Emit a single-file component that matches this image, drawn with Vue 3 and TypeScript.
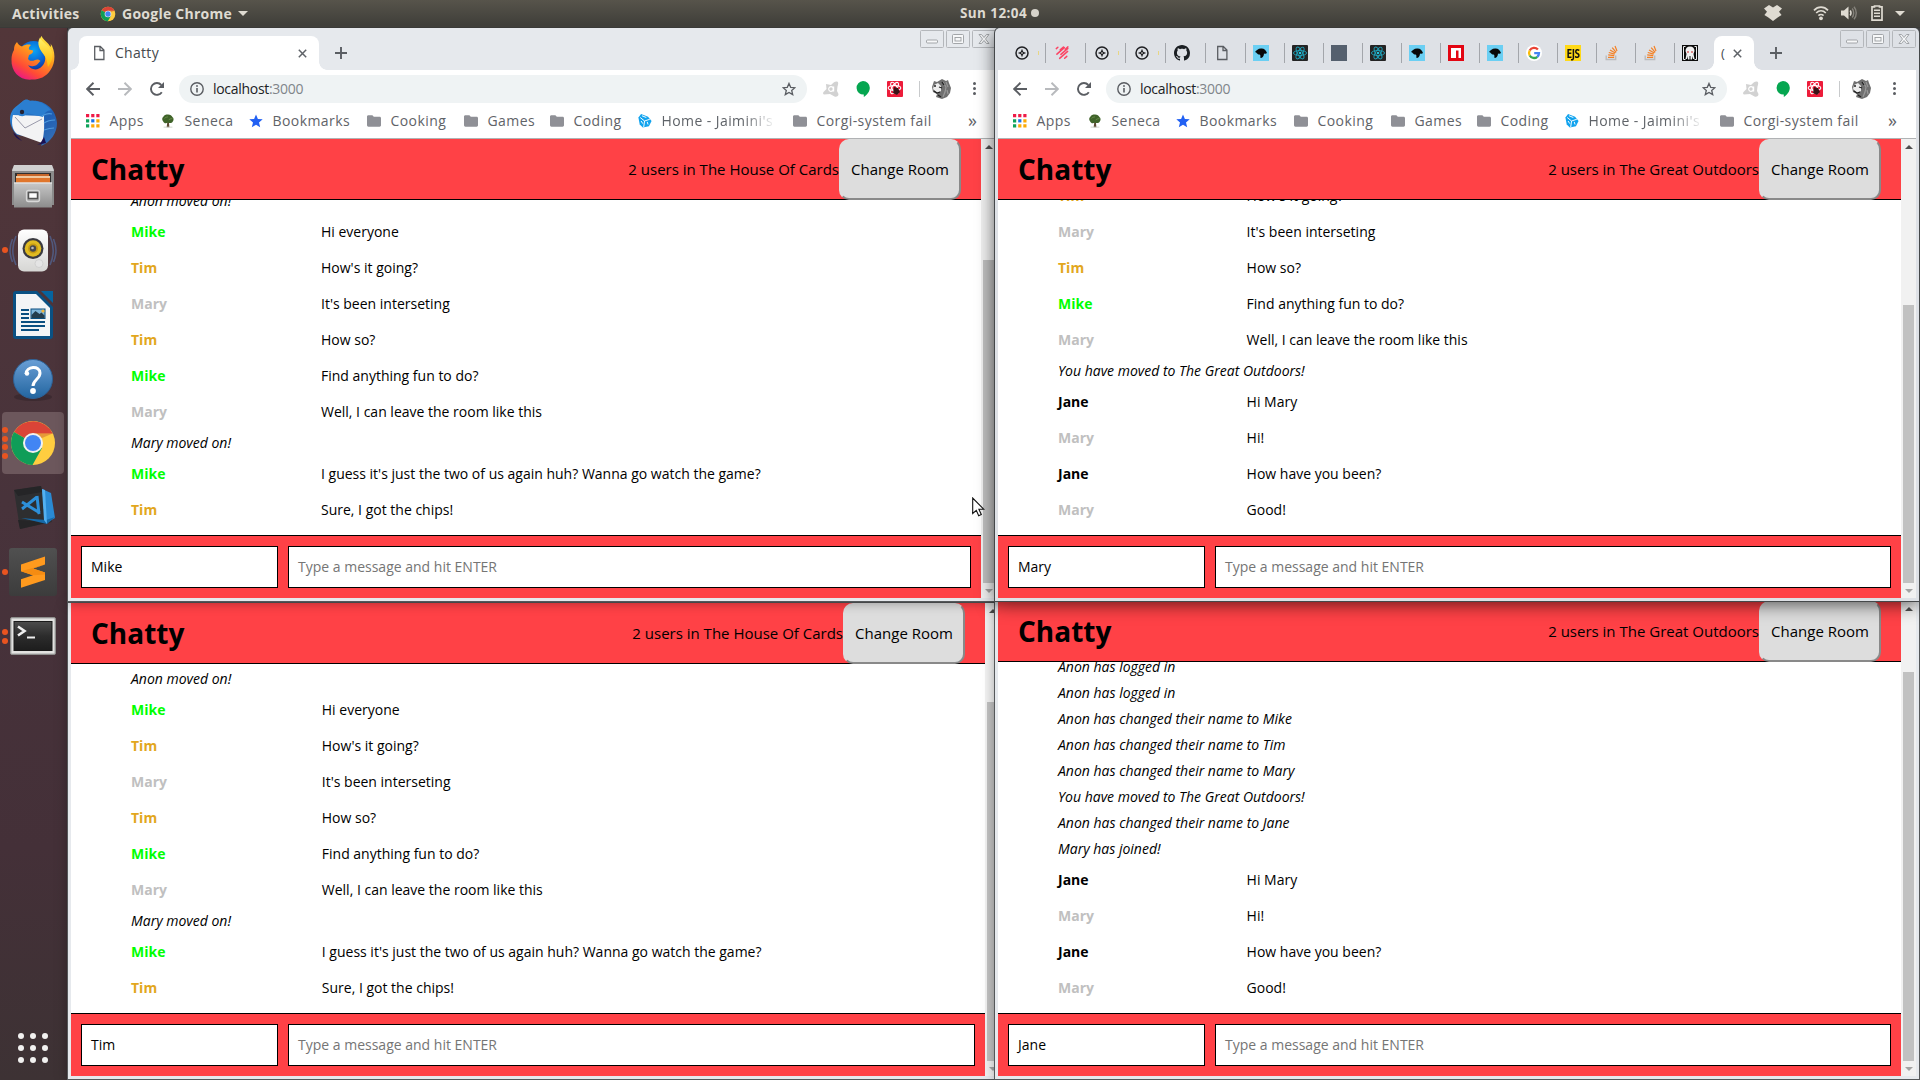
<script setup lang="ts">
interface Line {
  who?: string
  text: string
}
interface ChatWindow {
  id: string
  chrome: boolean
  room: string
  user: string
  thumbTop: number
  lines: Line[]
}

const house: Line[] = [
  { text: 'Anon moved on!' },
  { who: 'Mike', text: 'Hi everyone' },
  { who: 'Tim', text: "How's it going?" },
  { who: 'Mary', text: "It's been interseting" },
  { who: 'Tim', text: 'How so?' },
  { who: 'Mike', text: 'Find anything fun to do?' },
  { who: 'Mary', text: 'Well, I can leave the room like this' },
  { text: 'Mary moved on!' },
  { who: 'Mike', text: "I guess it's just the two of us again huh? Wanna go watch the game?" },
  { who: 'Tim', text: 'Sure, I got the chips!' },
]

const outdoors: Line[] = [
  { who: 'Jane', text: 'Hi Mary' },
  { who: 'Mary', text: 'Hi!' },
  { who: 'Jane', text: 'How have you been?' },
  { who: 'Mary', text: 'Good!' },
]

const windows: ChatWindow[] = [
  {
    id: 'jane', chrome: false, room: 'The Great Outdoors', user: 'Jane', thumbTop: 71,
    lines: [
      { text: 'Anon has logged in' },
      { text: 'Anon has logged in' },
      { text: 'Anon has changed their name to Mike' },
      { text: 'Anon has changed their name to Tim' },
      { text: 'Anon has changed their name to Mary' },
      { text: 'You have moved to The Great Outdoors!' },
      { text: 'Anon has changed their name to Jane' },
      { text: 'Mary has joined!' },
      ...outdoors,
    ],
  },
  { id: 'tim', chrome: false, room: 'The House Of Cards', user: 'Tim', thumbTop: 99, lines: house },
  { id: 'mike', chrome: true, room: 'The House Of Cards', user: 'Mike', thumbTop: 121, lines: house },
  {
    id: 'mary', chrome: true, room: 'The Great Outdoors', user: 'Mary', thumbTop: 166,
    lines: [
      { who: 'Tim', text: "How's it going?" },
      { who: 'Mary', text: "It's been interseting" },
      { who: 'Tim', text: 'How so?' },
      { who: 'Mike', text: 'Find anything fun to do?' },
      { who: 'Mary', text: 'Well, I can leave the room like this' },
      { text: 'You have moved to The Great Outdoors!' },
      ...outdoors,
    ],
  },
]

const bookmarks = [
  { icon: 'apps', label: 'Apps', width: 75 },
  { icon: 'tree', label: 'Seneca', width: 88 },
  { icon: 'bluestar', label: 'Bookmarks', width: 118 },
  { icon: 'folder', label: 'Cooking', width: 97 },
  { icon: 'folder', label: 'Games', width: 86 },
  { icon: 'folder', label: 'Coding', width: 88 },
  { icon: 'home', label: "Home - Jaimini's", width: 155, fade: true },
  { icon: 'folder', label: 'Corgi-system fail', width: 150 },
]

const tabs = ['compass', 'strokes', 'compass', 'compass', 'github', 'file', 'duck', 'react', 'square', 'react', 'duck', 'npm', 'duck', 'google', 'ejs', 'stack', 'stack', 'squid']

const dock = [
  { icon: 'firefox', dots: 0 },
  { icon: 'thunderbird', dots: 0 },
  { icon: 'files', dots: 0 },
  { icon: 'rhythmbox', dots: 1 },
  { icon: 'writer', dots: 0 },
  { icon: 'help', dots: 0 },
  { icon: 'chrome', dots: 4 },
  { icon: 'vscode', dots: 0 },
  { icon: 'sublime', dots: 1 },
  { icon: 'terminal', dots: 2 },
]
</script>

<template>
  <div class="desktop">
    <svg class="defs" width="0" height="0" aria-hidden="true">
      <defs>
        <linearGradient id="gFox" x1="0.8" y1="0" x2="0.2" y2="1"><stop offset="0" stop-color="#fff044" /><stop offset=".4" stop-color="#ff9a1c" /><stop offset=".75" stop-color="#ff4a36" /><stop offset="1" stop-color="#e8118f" /></linearGradient>
        <linearGradient id="gTail" x1="0" y1="0" x2="0" y2="1"><stop offset="0" stop-color="#fff36b" /><stop offset="1" stop-color="#ffb400" /></linearGradient>
        <radialGradient id="gGlobe" cx=".5" cy=".3" r=".8"><stop offset="0" stop-color="#0aa6f5" /><stop offset=".5" stop-color="#0a5fd0" /><stop offset="1" stop-color="#20106a" /></radialGradient>
        <linearGradient id="gBird" x1="0" y1="0" x2="1" y2="1"><stop offset="0" stop-color="#2f8fe0" /><stop offset=".6" stop-color="#1f5fb4" /><stop offset="1" stop-color="#3b74b8" /></linearGradient>
        <linearGradient id="gGrey" x1="0" y1="0" x2="0" y2="1"><stop offset="0" stop-color="#c8c8c8" /><stop offset="1" stop-color="#8c8c8c" /></linearGradient>
        <linearGradient id="gWhite" x1="0" y1="0" x2="0" y2="1"><stop offset="0" stop-color="#ffffff" /><stop offset="1" stop-color="#d6d6d4" /></linearGradient>
        <linearGradient id="gBlue" x1="0" y1="0" x2="0" y2="1"><stop offset="0" stop-color="#6a9fd6" /><stop offset="1" stop-color="#22659f" /></linearGradient>
        <linearGradient id="gTerm" x1="0" y1="0" x2="0" y2="1"><stop offset="0" stop-color="#4c4c4c" /><stop offset=".5" stop-color="#2c2c2c" /><stop offset="1" stop-color="#1d1d1d" /></linearGradient>
        <linearGradient id="gSub" x1="0" y1="0" x2="0" y2="1"><stop offset="0" stop-color="#505050" /><stop offset="1" stop-color="#3c3c3c" /></linearGradient>
      </defs>

      <symbol id="firefox" viewBox="0 -2 48 48">
        <circle cx="24.500" cy="22" r="16" fill="url(#gGlobe)" />
        <path d="M8 7c1 2 2.500 3.500 5 4.500 3-2 6.500-2.500 9-1.500-1.500 1-2.500 3-2 4.500l4 1c.5 2-1.500 3.500-4 4.500l-1 4c1.500 2 4 2.500 7 1 2-1 4.500-.5 5.500 1-2 1-2.500 4.500-7 5-2 .5-4 0-5.500-1 2 4 7 5.500 11 3.500 5-2.500 7.500-8 5.500-14-1.500-5-6-9-4.500-15 .5-2 1-3 1.500-3.500 1 3 4.500 5 7 8l2 3c.5-1 .5-2 0-3.500 5 7 5.500 19 0 26.500-4.500 7-11 9.500-18 9.500C11 46 2 37 2.500 24.500c0-4 1-7 2.500-9.500 0-3 .5-5.500 3-8z" fill="url(#gFox)" />
        <path d="M31 2.500c1.500 5 10 8 12 14.500 2 6-2 12-4 15-1-5-1-8-4-12-4-5-8-11-4-17.500z" fill="url(#gTail)" />
      </symbol>
      <symbol id="thunderbird" viewBox="0 -1 48 48">
        <path d="M14 2c2-2 5-2 7 0C34 0 47 9 48 24c0 10-6 19-16 23 2-4 2-6 2-8L8 36C-1 27-2 13 9 6z" fill="url(#gBird)" />
        <path d="M4 16l31 1c0 8 1 15-2 27L8 35c-5-4-6-12-4-19z" fill="#f3f3f4" />
        <path d="M6 18l10 11 17-9" fill="none" stroke="#99a" stroke-width="1" />
        <path d="M14 2c-4 4-6 8-6 13 5 4 8 2 10-1l16 4c2-5 4-6 8-7C34 2 26 1 14 2z" fill="#2b7ed0" />
        <path d="M33 17c3-2 7-3 10-2M35 24c3-2 7-3 11-3M35 31c3-1 6-2 10-2" fill="none" stroke="#4f9add" stroke-width="1.200" />
        <path d="M6 35l7 7c-5-2-8-5-9-9z M28 46c3-1 5-4 7-8l2 6z" fill="#1b1152" />
        <circle cx="13" cy="13" r="2.200" fill="#223" />
      </symbol>
      <symbol id="files" viewBox="0 0 48 48">
        <path d="M5 3.500h38l2 4V43H3V7.500z" fill="#8b8b8b" /><path d="M5 3h38l2 6H3z" fill="#d0d0d0" />
        <rect x="6" y="11" width="36" height="12" fill="#33302f" /><rect x="8" y="12" width="32" height="10" fill="#c8672a" /><path d="M7 14h34v7H7z" fill="#f0c9a0" /><path d="M7 16h34v5H7z" fill="#e0762c" />
        <rect x="5" y="20.500" width="38" height="25" fill="url(#gGrey)" /><path d="M5 20.500h38v1H5z" fill="#eee" />
        <rect x="17.500" y="28.500" width="13" height="11" rx="2" fill="#aaa" stroke="#d8d8d8" stroke-width="1.300" /><rect x="19.500" y="30.500" width="9" height="6" fill="#fff" stroke="#555" stroke-width="1.500" />
      </symbol>
      <symbol id="rhythmbox" viewBox="0 0 48 48">
        <g fill="none" stroke="#51587c" stroke-width="1.600"><path d="M7 10c-4 9-4 20 0 29M3.500 13c-3 7-3 16 0 23M41 10c4 9 4 20 0 29M44.500 13c3 7 3 16 0 23" /></g>
        <rect x="9" y="3.500" width="30" height="42" rx="6" fill="url(#gWhite)" />
        <circle cx="24" cy="22.500" r="10.500" fill="#3a3a40" /><circle cx="24" cy="22.500" r="8.300" fill="#e0bb22" /><circle cx="24" cy="22.500" r="5" fill="#c79b12" /><circle cx="24" cy="22.500" r="3.200" fill="#46484c" /><circle cx="23.500" cy="22" r="1.300" fill="#bbb" />
        <circle cx="30" cy="37.500" r="4" fill="#e4e4e4" stroke="#c8c8c8" stroke-width=".7" />
      </symbol>
      <symbol id="writer" viewBox="0 0 48 48">
        <path d="M7 0h21l16 16v29a3 3 0 0 1-3 3H7a3 3 0 0 1-3-3V3a3 3 0 0 1 3-3z" fill="#0a5183" /><path d="M32 0h12v12z" fill="#06649f" />
        <path d="M7 3h20l14 14v28H7z" fill="#f3f5f6" />
        <g stroke="#0a4f80" stroke-width="2.200"><path d="M12 19h8M12 23h8M12 27h8M12 31h24M12 35h24M12 39h18" /></g>
        <rect x="22" y="18" width="14" height="9.500" fill="#7fb5d9" stroke="#0a4f80" stroke-width="1" /><path d="M22.500 27v-3l4-4 4 3 2-1.500 3 3V27z" fill="#243d4d" /><circle cx="34" cy="20" r="1.600" fill="#f0b63a" />
      </symbol>
      <symbol id="help" viewBox="0 0 48 48">
        <ellipse cx="24" cy="42" rx="19" ry="4" fill="#33252a" opacity=".6" /><circle cx="24" cy="24" r="19.500" fill="url(#gBlue)" stroke="#2d6196" stroke-width="1" />
        <path d="M17 19c0-8 14-9 14-1 0 6-7 7-7 13" fill="none" stroke="#fff" stroke-width="3" /><circle cx="18" cy="18.500" r="2.200" fill="#fff" /><circle cx="24" cy="36" r="2.900" fill="#fff" />
      </symbol>
      <symbol id="chrome" viewBox="0 0 48 48">
        <circle cx="24" cy="24" r="22" fill="#ffcd40" />
        <path d="M24 24L5 13A22 22 0 0 1 43.700 14.500H24z" fill="#db4437" />
        <path d="M5 13A22 22 0 0 0 23.500 46L33 29 24 24z" fill="#0f9d58" />
        <path d="M24 14.500h19.700L33 19z" fill="#b83a2e" opacity=".35" />
        <circle cx="24" cy="24" r="10" fill="#f1f1f1" /><circle cx="24" cy="24" r="8" fill="#4285f4" />
      </symbol>
      <symbol id="vscode" viewBox="0 0 48 48">
        <path d="M5 6l27-4 11 36L11 45z" fill="#2e2e30" /><path d="M5 6l27-4 1 6-24 4zM9 36l32 2-30 7z" fill="#252527" />
        <path d="M33 5l9 4 4 25-9 5z" fill="#2a8ad4" /><path d="M12 34l25 2 9-3-8 7z" fill="#1669a8" /><path d="M33 5l2 31 3 4-2-34z" fill="#53b0f0" />
        <path d="M13 25l15-12M13 18l18 11M28 12l2 18" fill="none" stroke="#2d8fd9" stroke-width="3" />
      </symbol>
      <symbol id="sublime" viewBox="0 0 48 48">
        <rect width="48" height="48" rx="3" fill="url(#gSub)" />
        <path d="M12 16.500L36 8.500v8L24 20.500l12 4v7.500L12 39.800v-8.500l12-4-12-4z" fill="#ff9a1e" /><path d="M12 23.300l24-6.800-12 4 12 4v2L24 27.300z" fill="#f58c12" />
      </symbol>
      <symbol id="terminal" viewBox="0 0 48 48">
        <rect x="1.500" y="5.500" width="45" height="37" rx="1.500" fill="#c4c4c4" stroke="#8f8f8d" /><rect x="3" y="7" width="42" height="34" fill="#e2e2e0" /><rect x="5" y="9.500" width="38" height="29" fill="url(#gTerm)" stroke="#1a1a1a" />
        <path d="M9 14.500l6.500 4.500L9 23.500" fill="none" stroke="#eee" stroke-width="2.600" /><path d="M18 25.500h8" stroke="#eee" stroke-width="2" />
      </symbol>

      <symbol id="back" viewBox="0 0 14 14"><path d="M14 7H1.500M7.500.8L1.200 7l6.300 6.200" fill="none" stroke="currentColor" stroke-width="1.900" /></symbol>
      <symbol id="fwd" viewBox="0 0 14 14"><path d="M0 7h12.500M6.500.8L12.800 7l-6.300 6.200" fill="none" stroke="currentColor" stroke-width="1.900" /></symbol>
      <symbol id="reload" viewBox="0 0 14 14"><path d="M11.800 10.200A5.900 5.900 0 1 1 11.300 3" fill="none" stroke="currentColor" stroke-width="1.900" /><path d="M14 0v6H8z" fill="currentColor" /></symbol>
      <symbol id="info" viewBox="0 0 14 14"><circle cx="7" cy="7" r="6.200" fill="none" stroke="currentColor" stroke-width="1.400" /><path d="M7 6v4.500" stroke="currentColor" stroke-width="1.600" /><circle cx="7" cy="4" r=".9" fill="currentColor" /></symbol>
      <symbol id="star" viewBox="0 0 14 14"><path d="M7 1.400l1.700 3.900 4.200.4-3.200 2.800 1 4.100L7 10.400l-3.700 2.200 1-4.100L1.100 5.700l4.200-.4z" fill="none" stroke="currentColor" stroke-width="1.300" /></symbol>
      <symbol id="file" viewBox="0 0 16 16"><path d="M3.700 1.500h5.600l3.600 3.600v9.400H3.700zM9 1.500v4h4" fill="none" stroke="#5a5d62" stroke-width="1.300" /></symbol>
      <symbol id="close" viewBox="0 0 9 9"><path d="M.8.8l7.400 7.400M8.200.8L.8 8.200" stroke="#5f6368" stroke-width="1.500" /></symbol>
      <symbol id="plus" viewBox="0 0 12 12"><path d="M6 0v12M0 6h12" stroke="#5a5e63" stroke-width="1.900" /></symbol>
      <symbol id="apps" viewBox="0 0 14 14">
        <path d="M0 0h3.200v3.200H0zM5.200 0h3.200v3.200H5.200zM10.300 0h3.200v3.200h-3.200z" fill="#ef1a46" /><path d="M0 5.200h3.200v3.200H0zM0 10.200h3.200v3.200H0z" fill="#0fa35a" /><path d="M5.200 5.200h3.200v3.200H5.200z" fill="#1a73e8" /><path d="M10.300 5.200h3.200v3.200h-3.200zM5.200 10.200h3.200v3.200H5.200zM10.300 10.200h3.200v3.200h-3.200z" fill="#fba906" />
      </symbol>
      <symbol id="tree" viewBox="0 0 14 16"><path d="M5.500 15l.7-6h1.800l.6 6z" fill="#5d4a35" /><path d="M7 .5c3 0 4 1 5 3 2 1 1.500 4 .5 5-1 2-3 2-5.500 1.500C4 11 2.500 10.500 1.500 8.500 0 7 0 4.500 1.500 3.500 2.500 1 4.500.5 7 .5z" fill="#3f6329" /><path d="M3 5c2-2 3-1 4-2M8 7c1-2 2-1 4-2" stroke="#6f9150" stroke-width="1" fill="none" /><path d="M2 15h10" stroke="#c9cfc4" stroke-width="1" /></symbol>
      <symbol id="bluestar" viewBox="0 0 14 14"><path d="M7 .6l1.900 4.400 4.800.3-3.700 3.100 1.200 4.800L7 10.700l-4.200 2.500L4 8.400.3 5.300l4.800-.3z" fill="#2160f3" /></symbol>
      <symbol id="folder" viewBox="0 0 14 14"><path d="M1.400 1.200h4L6.800 2.700h5.800c.8 0 1.400.6 1.400 1.400v7.200c0 .8-.6 1.400-1.400 1.400H1.400A1.400 1.400 0 0 1 0 11.300V2.600c0-.8.600-1.400 1.400-1.400z" fill="#8f9096" /></symbol>
      <symbol id="home" viewBox="0 0 15 16"><path d="M3 0l8 3 4 5-3 6-7 1.500L1.500 12 0 4z" fill="#11a3ee" /><path d="M2 4l5 4 6-2M7 8l-1 7M4 2l5 2M3 8l2 3M10 9l1 3" stroke="#fff" stroke-width="1.100" fill="none" /></symbol>
      <symbol id="avast" viewBox="0 0 16 16"><path d="M3 3l5 1c2-2 4-4 6-3.500 2 1 1 3 .5 5L14 10l1.500 3c0 2.500-2 3-4 2.500L7 13l-6 .5c-1.500-1-1-2 0-3L3.500 8z" fill="#d2d2d2" /><circle cx="8" cy="8" r="2.300" fill="none" stroke="#fff" stroke-width="1.200" /><path d="M10.600 5.500v5" stroke="#fff" stroke-width="1.200" /></symbol>
      <symbol id="hangouts" viewBox="0 0 14 16"><path d="M7 0a6.800 6.800 0 0 1 6.800 6.800c0 4-2.800 7.200-6 9.200v-2.400A6.800 6.800 0 0 1 7 0z" fill="#05a650" /></symbol>
      <symbol id="redreact" viewBox="0 0 16 16"><rect width="16" height="16" rx="1" fill="#ed1c3a" /><g fill="none" stroke="#fff" stroke-width="1.100"><ellipse cx="7.500" cy="7" rx="6.300" ry="2.500" /><ellipse cx="7.500" cy="7" rx="6.300" ry="2.500" transform="rotate(60 7.500 7)" /><ellipse cx="7.500" cy="7" rx="6.300" ry="2.500" transform="rotate(120 7.500 7)" /></g><path d="M7 6l4 1 2 4-3 3-4-2z" fill="#3a1418" /></symbol>
      <symbol id="avatar" viewBox="0 0 20 20"><path d="M2 2l3 1 5-3 4 2 2-1 1 3 2 5-1 5-3 4-5 2-6-2 1-3-4-2-1-5z" fill="#707070" /><path d="M2 6l4-2 3 3v5l-4 2-4-4z" fill="#ededed" /><path d="M11 3l3 5-1 5-2 5M14 3l2 5M15 11l1 4" stroke="#999" stroke-width="1.200" fill="none" /><path d="M2 7h2M7 8l3 1M2 12l3 2 3-1M6 16l3 2M10 3l2 3" stroke="#222" stroke-width="1.300" fill="none" /></symbol>
      <symbol id="compass" viewBox="0 0 16 16"><circle cx="8" cy="8" r="6" fill="none" stroke="#202124" stroke-width="1.500" /><path d="M8 3.800l1.200 3L12.200 8l-3 1.200-1.200 3-1.200-3-3-1.200 3-1.200z" fill="#202124" /><circle cx="8" cy="8" r=".8" fill="#fff" /></symbol>
      <symbol id="strokes" viewBox="0 0 16 16"><path d="M2 4l1.500-1.500M6 5l3-3M11 4l2.500-2.500M3 9.500l7-7M7 9.500L13.500 3M6 13.500L13.500 6M11 13l2-2" stroke="#fb4464" stroke-width="1.500" stroke-linecap="round" transform="rotate(4 8 8)" /></symbol>
      <symbol id="github" viewBox="0 0 16 16"><path fill="#1b1f23" d="M8 0C3.580 0 0 3.580 0 8c0 3.540 2.290 6.530 5.470 7.590.4.070.55-.17.55-.38 0-.19-.01-.82-.01-1.490-2.010.37-2.530-.49-2.690-.94-.09-.23-.48-.94-.82-1.130-.28-.15-.68-.52-.01-.53.63-.01 1.080.58 1.230.82.72 1.210 1.870.87 2.330.66.07-.52.28-.87.51-1.070-1.780-.2-3.640-.89-3.640-3.950 0-.87.31-1.590.82-2.150-.08-.2-.36-1.020.08-2.120 0 0 .67-.21 2.200.82.640-.18 1.320-.27 2-.27s1.360.09 2 .27c1.530-1.040 2.200-.82 2.200-.82.44 1.100.16 1.920.08 2.120.51.56.82 1.270.82 2.150 0 3.070-1.870 3.750-3.650 3.950.29.25.54.73.54 1.480 0 1.070-.01 1.930-.01 2.200 0 .21.15.46.55.38A8.010 8.010 0 0 0 16 8c0-4.420-3.580-8-8-8z" /></symbol>
      <symbol id="duck" viewBox="0 0 16 16"><rect width="16" height="16" fill="#6bcff3" /><path d="M2 7C3.500 5.500 5 3.500 8 3.500c3-.3 5 1.500 6 4.500-1 1-2 .8-3 .5C11 11 9.500 13 7.500 13 7 11.500 8 10 6.500 9.500 4 9.500 4 7.500 2 7z" fill="#080808" /></symbol>
      <symbol id="react" viewBox="0 0 16 16"><rect width="16" height="16" rx="1" fill="#242424" /><g fill="none" stroke="#1fa3bb" stroke-width=".9"><ellipse cx="8" cy="8" rx="6.600" ry="2.500" /><ellipse cx="8" cy="8" rx="6.600" ry="2.500" transform="rotate(60 8 8)" /><ellipse cx="8" cy="8" rx="6.600" ry="2.500" transform="rotate(120 8 8)" /></g><circle cx="8" cy="8" r="1.300" fill="#25c2dd" /></symbol>
      <symbol id="square" viewBox="0 0 16 16"><rect width="16" height="16" fill="#55606e" /></symbol>
      <symbol id="npm" viewBox="0 0 16 16"><rect width="16" height="16" fill="#e30613" /><path d="M3 3h10v10h-2.500V5.500H8V13H3z" fill="#fff" /></symbol>
      <symbol id="google" viewBox="0 0 16 16"><circle cx="8" cy="8" r="8" fill="#fff" /><g fill="none" stroke-width="2.300"><path d="M11.900 4.600A5 5 0 0 0 3.700 5.500" stroke="#ea4335" /><path d="M3.700 5.500a5 5 0 0 0 0 5" stroke="#fbbc05" /><path d="M3.700 10.500a5 5 0 0 0 7.600 1.300" stroke="#34a853" /><path d="M11.300 11.800A5 5 0 0 0 13 8.100H8.200" stroke="#4285f4" /></g></symbol>
      <symbol id="stack" viewBox="0 0 16 16"><path d="M2.200 10.500v4h9.500v-4" fill="none" stroke="#bcbbbb" stroke-width="1.400" /><path d="M4 12.300h6.200M4.200 9.900l6.100.7M4.800 7.500l5.900 1.700M6 5l5.300 3M8.200 2.700l4 4.600M11 1l2 5" stroke="#f48024" stroke-width="1.200" /></symbol>
      <symbol id="squid" viewBox="0 0 16 16"><rect width="16" height="16" fill="#0c0c0c" /><path d="M3.500 1.500h-2v13h2M12.500 1.500h2v13h-2" stroke="#eee" stroke-width="1" fill="none" /><path d="M8 1.500c3 0 4.500 2 4.500 4.500l-1 3 1 5H11l-.7-3-.3 3.500H8.500V11h-1v3.500H6L5.700 11 5 14H3.500l1-5-1-3C3.500 3.500 5 1.500 8 1.500z" fill="#f2f2f2" /><path d="M5 7h2M9 7h2" stroke="#c22" stroke-width="1.200" /></symbol>
    </svg>

    <header class="topbar">
      <span class="activities">Activities</span>
      <svg class="topchrome"><use href="#chrome" /></svg>
      <span class="appname">Google Chrome</span>
      <i class="caret" />
      <span class="clock">Sun 12:04</span>
      <i class="clockdot" />
      <div class="tray">
        <svg width="18" height="18" viewBox="0 0 18 18"><path d="M5 1l4 2.500L13 1l5 3.500-3 3.200 2.600 3.300-3.600 2.300L9 17l-5-3.700L.4 11 3 7.700 0 4.500z" fill="#dfdbd2" /></svg>
        <svg class="wifi" width="16" height="16" viewBox="0 0 16 16"><g fill="none" stroke="#dfdbd2" stroke-width="1.700"><path d="M1 5.300C5 1 11 1 15 5.300M3.200 8c2.800-2.800 6.800-2.800 9.600 0M5.400 10.600c1.500-1.500 3.700-1.500 5.200 0" /></g><circle cx="8" cy="13.300" r="1.900" fill="#dfdbd2" /></svg>
        <svg class="vol" width="16" height="14" viewBox="0 0 16 14"><path d="M0 4.500h3L7.500.5v13L3 9.500H0z" fill="#dfdbd2" /><path d="M9.200 4.500c1 1.500 1 3.500 0 5" fill="none" stroke="#dfdbd2" stroke-width="1.500" /><path d="M11.200 2.500c2 2.500 2 6.500 0 9M13 .8c3 3.500 3 9 0 12.400" fill="none" stroke="#85827b" stroke-width="1.400" /></svg>
        <svg class="bat" width="12" height="16" viewBox="0 0 12 16"><path d="M3.500 1.800V1h5v.8H11V15.200H1V1.800z" fill="none" stroke="#dfdbd2" stroke-width="1.700" /><path d="M3 5.300h6M3 8.300h6M3 11.300h6" stroke="#dfdbd2" stroke-width="1.600" /></svg>
        <i class="caret" />
      </div>
    </header>

    <nav class="dock">
      <div v-for="d in dock" :key="d.icon" class="dockitem" :class="{ active: d.icon === 'chrome' }">
        <div class="dots"><i v-for="n in d.dots" :key="n" /></div>
        <svg class="dockicon"><use :href="'#' + d.icon" /></svg>
      </div>
      <div class="grid"><i v-for="n in 9" :key="n" /></div>
    </nav>

    <section v-for="w in windows" :key="w.id" class="window" :class="w.id">
      <template v-if="w.chrome">
        <div class="strip">
          <template v-if="w.id === 'mike'">
            <div class="tab wide">
              <svg class="i16"><use href="#file" /></svg>
              <span class="tabtitle">Chatty</span>
              <svg class="x"><use href="#close" /></svg>
            </div>
          </template>
          <template v-else>
            <div v-for="(t, n) in tabs" :key="n" class="mini" :class="{ first: n < 6, last: n === tabs.length - 1 }">
              <span v-if="t === 'ejs'" class="ejs"><b>EJS</b></span>
              <svg v-else class="i16"><use :href="'#' + t" /></svg>
              <i v-if="t === 'compass'" class="speck" />
            </div>
            <div class="tab narrow">
              <span class="paren">(</span>
              <svg class="x"><use href="#close" /></svg>
            </div>
          </template>
          <svg class="newtab"><use href="#plus" /></svg>
          <div class="wbtns">
            <svg viewBox="0 0 24 18"><rect x=".5" y=".5" width="23" height="17" rx="1" /><rect class="g" x="6.500" y="10" width="11" height="3" rx="1" /></svg>
            <svg viewBox="0 0 24 18"><rect x=".5" y=".5" width="23" height="17" rx="1" /><rect class="g" x="6.500" y="4.500" width="11" height="9" rx="1" /><rect class="g" x="9" y="7.500" width="6" height="3.500" /></svg>
            <svg viewBox="0 0 24 18"><rect x=".5" y=".5" width="23" height="17" rx="1" /><path class="g" d="M7 4.500h2.500L12 7.500l2.500-3H17L13.500 9l3.500 4.500h-2.500L12 10.500l-2.500 3H7L10.500 9z" /></svg>
          </div>
        </div>
        <div class="toolbar">
          <svg class="i14 nav"><use href="#back" /></svg>
          <svg class="i14 nav dim"><use href="#fwd" /></svg>
          <svg class="i14 nav"><use href="#reload" /></svg>
          <div class="omnibox">
            <svg class="i14"><use href="#info" /></svg>
            <span class="url">localhost<em>:3000</em></span>
            <svg class="i14"><use href="#star" /></svg>
          </div>
          <svg class="i16 avast"><use href="#avast" /></svg>
          <svg class="i16 hang"><use href="#hangouts" /></svg>
          <svg class="i16 red"><use href="#redreact" /></svg>
          <i class="sep" />
          <svg class="avatar"><use href="#avatar" /></svg>
          <div class="menu"><i /><i /><i /></div>
        </div>
        <div class="bookmarks">
          <div v-for="(b, n) in bookmarks" :key="n" class="bm" :style="{ width: b.width + 'px' }">
            <svg class="bmicon"><use :href="'#' + b.icon" /></svg>
            <span :class="{ fade: b.fade }">{{ b.label }}</span>
          </div>
          <span class="more">»</span>
        </div>
      </template>

      <div class="view">
        <div class="page">
          <div class="head">
            <h1>Chatty</h1>
            <span class="status">2 users in {{ w.room }}</span>
            <button>Change Room</button>
          </div>
          <div class="messages">
            <div v-for="(l, n) in w.lines" :key="n" class="row" :class="{ system: !l.who }">
              <template v-if="l.who">
                <b class="who" :class="'c-' + l.who.toLowerCase()">{{ l.who }}</b>
                <span>{{ l.text }}</span>
              </template>
              <i v-else>{{ l.text }}</i>
            </div>
          </div>
          <div class="foot">
            <div class="field name">{{ w.user }}</div>
            <div class="field msg">Type a message and hit ENTER</div>
          </div>
        </div>
        <div class="scroll">
          <i class="up" />
          <i class="thumb" :style="{ marginTop: w.thumbTop - 15 + 'px' }" />
          <i class="down" />
        </div>
      </div>
    </section>

    <svg class="cursor" viewBox="0 0 13 20"><path d="M.7 1v15.500l3.600-3.200 2.400 5.400 2.600-1.200-2.400-5.200h5z" fill="#fff" stroke="#111" stroke-width="1.100" /></svg>
  </div>
</template>

<style>
body { margin: 0; overflow: hidden; background: #45323a; }
</style>

<style scoped>
* { box-sizing: border-box; }
.desktop { position: relative; width: 1920px; height: 1080px; overflow: hidden; background: #4a4a4c; font-family: "Open Sans", "Noto Sans", sans-serif; }
.defs { position: absolute; }
svg { display: block; flex: none; }
.i16 { width: 16px; height: 16px; }
.i14 { width: 14px; height: 14px; }

.topbar { position: relative; z-index: 10; height: 28px; display: flex; align-items: center; padding: 0 13px 0 12px; background: linear-gradient(#57544b, #403f3a 90%); border-bottom: 1px solid #3a3a38; color: #dfdbd2; font: bold 14px "Open Sans", sans-serif; letter-spacing: .25px; }
.activities { width: 88px; }
.topchrome { width: 16px; height: 16px; margin-right: 6px; }
.appname { width: 110px; white-space: nowrap; }
.caret { width: 0; height: 0; border: 5px solid transparent; border-top-color: #dfdbd2; border-bottom: 0; margin-left: 6px; }
.clock { margin-left: 712px; width: 67px; white-space: nowrap; font-size: 13.500px; padding-bottom: 1px; letter-spacing: .4px; }
.clockdot { width: 8px; height: 8px; border-radius: 50%; background: #d5d2ca; margin-left: 4px; margin-bottom: 1px; }
.tray { display: flex; align-items: center; margin-left: auto; padding-bottom: 1px; }
.wifi { margin-left: 31px; }
.vol { margin-left: 12px; }
.bat { margin-left: 14px; }
.tray .caret { margin-left: 12px; margin-right: 2px; }

.dock { position: relative; width: 68px; height: 1052px; display: flex; flex-direction: column; background: linear-gradient(#523639, #48333b 45%, #443038 78%, #3d3234); border-right: 1px solid #363031; }
.dockitem { position: relative; height: 64.350px; flex: none; display: flex; align-items: center; padding-left: 9px; }
.dock .dockitem:first-child { margin-top: -3px; }
.active::before { content: ""; position: absolute; left: 2px; top: 1px; width: 62px; height: 62px; border-radius: 4px; background: #6c575c; }
.dockicon { position: relative; width: 48px; height: 48px; }
.dots { position: absolute; left: 2px; top: 0; height: 100%; display: flex; flex-direction: column; justify-content: center; gap: 2.500px; z-index: 1; }
.dots i { width: 6px; height: 6px; border-radius: 50%; background: #e95420; }
.grid { margin: auto 0 17px 18px; width: 30px; display: grid; grid-template-columns: repeat(3, 6px); gap: 6px; }
.grid i { width: 6px; height: 6px; border-radius: 50%; background: #f2f1f0; }

.window { position: absolute; display: flex; flex-direction: column; padding: 0 3px 3px; --frame: #e6e9ed; background: var(--frame); box-shadow: 0 0 0 1px #55585a, 0 2px 12px rgba(0, 0, 0, .35); }
.mike { left: 68px; top: 28px; width: 931px; height: 573px; border-radius: 5px 0 0 0; }
.mary { left: 995px; top: 28px; width: 924px; height: 573px; --frame: #dee1e6; border-radius: 5px 5px 0 0; box-shadow: 0 0 0 1px #45484a, 0 3px 18px rgba(0, 0, 0, .65); }
.tim { left: 68px; top: 603px; width: 935px; height: 476px; }
.jane { left: 995px; top: 601px; width: 924px; height: 478px; z-index: 1; }
.mike, .mary { z-index: 2; }

.strip { position: relative; height: 42px; flex: none; display: flex; align-items: center; padding: 8px 0 0 8px; }
.tab { position: relative; height: 34px; flex: none; display: flex; align-items: center; background: #fff; border-radius: 8px 8px 0 0; }
.tab::before, .tab::after { content: ""; position: absolute; bottom: 0; width: 8px; height: 8px; background: radial-gradient(circle at 0 0, transparent 7.500px, #fff 8px); left: -8px; }
.tab::after { left: auto; right: -8px; background: radial-gradient(circle at 100% 0, transparent 7.500px, #fff 8px); }
.wide { width: 240px; padding-left: 12px; }
.tabtitle { flex: 1; padding: 0 0 1px 8px; font-size: 14px; color: #45494d; letter-spacing: .3px; }
.wide .x { margin-right: 12px; }
.x { width: 9px; height: 9px; }
.mini { width: 39px; height: 20px; display: flex; align-items: center; border-right: 1px solid #a3a6ab; padding-left: 7px; flex: none; }
.mini.first { width: 40px; padding-left: 8px; }
.mini.last { border: 0; }
.ejs { width: 16px; height: 16px; background: #ffd918; color: #111; display: flex; align-items: center; justify-content: center; font-size: 10px; line-height: 16px; letter-spacing: -.5px; }
.ejs b { transform: scaleY(1.25); }
.speck { width: 1px; height: 4px; margin-left: 8px; background: #e8d684; }
.narrow { width: 40px; padding-left: 7px; }
.narrow .x { margin-left: 6px; }
.paren { width: 6px; font-size: 13px; overflow: hidden; color: #45494d; }
.newtab { width: 12px; height: 12px; margin-left: 16px; }
.wbtns { position: absolute; right: 0; top: 2px; display: flex; gap: 2px; }
.wbtns svg { width: 24px; height: 18px; }
.wbtns rect, .wbtns path { fill: none; stroke: #b4b7bb; }
.wbtns .g { fill: #f7f8f9; stroke: #9a9da0; stroke-width: .9; }

.toolbar { height: 38px; flex: none; background: #fff; display: flex; align-items: center; padding: 0 20px 1px 15px; color: #5a5d62; }
.nav { margin-right: 18px; }
.nav.dim { color: #b8babd; }
.omnibox { flex: 1; height: 28px; margin-left: -3px; border-radius: 14px; background: #eff3f4; display: flex; align-items: center; padding: 0 11px 0 11px; }
.url { flex: 1; padding: 0 0 1px 9px; font-size: 14px; color: #202124; letter-spacing: -.3px; }
.url em { font-style: normal; color: #80858a; }
.avast { margin-left: 16px; }
.hang { margin-left: 16px; }
.red { margin-left: 16px; }
.sep { width: 1px; height: 16px; background: #c8cacc; margin-left: 16px; }
.avatar { width: 20px; height: 20px; margin-left: 12px; }
.menu { display: flex; flex-direction: column; gap: 2px; margin-left: 21px; }
.menu i { width: 3px; height: 3px; border-radius: 50%; background: #5a5d62; }
.bookmarks { height: 31px; flex: none; background: #fff; border-bottom: 1px solid #b0b2b4; display: flex; align-items: center; padding: 0 19px 5px 15px; color: #5f6368; font-size: 14px; letter-spacing: .42px; }
.bm { display: flex; align-items: center; flex: none; white-space: nowrap; }
.bmicon { width: 14px; height: 14px; margin-right: 9.500px; }
.fade { width: 114px; overflow: hidden; -webkit-mask-image: linear-gradient(90deg, #000 72%, transparent); mask-image: linear-gradient(90deg, #000 72%, transparent); }
.more { margin-left: auto; font-size: 18px; line-height: 20px; letter-spacing: 0; padding-bottom: 2px; }

.view { flex: 1; min-height: 0; display: flex; }
.page { flex: 1; min-width: 0; display: flex; flex-direction: column; background: #fff; color: #000; }
.head { height: 61px; flex: none; display: flex; align-items: center; padding: 0 20px 1px; background: linear-gradient(#000, #000) bottom / 100% 1px no-repeat #ff4146; font-size: 15px; }
.head h1 { margin: 0 auto 0 0; font-size: 28px; line-height: 1; }
.head button { width: 122px; height: 61px; margin-bottom: -1px; padding: 0 0 1px; font: 15px "Open Sans", sans-serif; color: #000; background: #ddd; border: 2px outset #ddd; border-radius: 10px; }
.messages { flex: 1; min-height: 0; overflow: hidden; display: flex; flex-direction: column; justify-content: flex-end; padding-bottom: 8px; font-size: 14px; }
.row { height: 36px; flex: none; display: flex; align-items: center; white-space: nowrap; }
.row.system { height: 26px; padding-left: 60px; }
.who { width: calc(20% + 68px); padding-left: 60px; }
.c-mike { color: #0f0; }
.c-tim { color: #e2a71d; }
.c-mary { color: silver; }
.foot { height: 63px; flex: none; display: flex; gap: 10px; padding: 10px; border-top: 1px solid #000; background: #ff4146; }
.field { height: 42px; border: 1px solid #000; background: #fff; display: flex; align-items: center; padding: 0 0 2px 9px; font-size: 14px; }
.name { width: 197px; }
.msg { flex: 1; color: #757575; }
.scroll { width: 15px; flex: none; display: flex; flex-direction: column; background: #f1f1f1; }
.up, .down { flex: none; width: 0; height: 0; border: 4px solid transparent; margin-left: 4px; }
.up { border-top: 0; border-bottom-color: #505050; margin-top: 6px; margin-bottom: 5px; }
.down { border-bottom: 0; border-top-color: #a3a3a3; margin-top: 6px; margin-bottom: 5px; }
.thumb { flex: 1; width: 11px; margin-left: 2px; background: #c1c1c1; }
.cursor { position: absolute; z-index: 5; left: 972px; top: 497px; width: 13px; height: 20px; }
</style>
